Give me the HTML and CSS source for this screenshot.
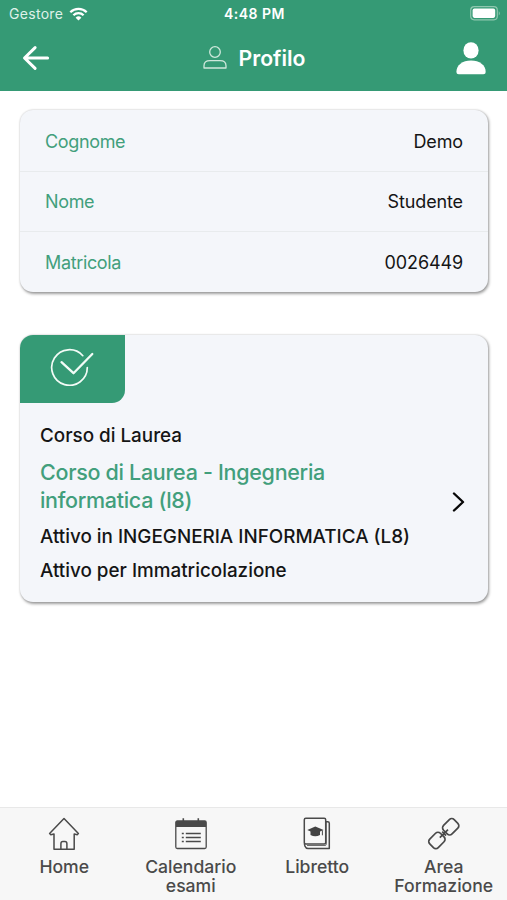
FILE: index.html
```html
<!DOCTYPE html>
<html lang="it">
<head>
<meta charset="utf-8">
<meta name="viewport" content="width=device-width, initial-scale=1">
<title>Profilo</title>
<link rel="stylesheet" href="styles.css">
</head>
<body>
<div class="app">
  <header class="header">
    <div class="status">
      <span class="carrier">Gestore
        <svg width="19" height="14" viewBox="0 0 18 14" fill="none" stroke="#fff" stroke-width="2.3"><path d="M.8 5.2a11.7 11.7 0 0 1 16.4 0M3.9 8.3a7.3 7.3 0 0 1 10.2 0"/><path d="M9 13.6 6.1 10.7a4.1 4.1 0 0 1 5.8 0z" fill="#fff" stroke="none"/></svg>
      </span>
      <span class="time">4:48 PM</span>
      <svg class="battery" width="31" height="15" viewBox="0 0 31 15"><rect x=".7" y=".7" width="26.6" height="13.1" rx="3.5" fill="none" stroke="#8fc7af" stroke-width="1.2"/><rect x="2.6" y="2.6" width="22.6" height="9.3" rx="1.8" fill="#fff"/><path d="M28.8 5v4.6q2-2.3 0-4.6z" fill="#8fc7af"/></svg>
    </div>
    <div class="bar">
      <svg width="28" height="26" viewBox="0 0 28 26" fill="none" stroke="#fff" stroke-width="3" stroke-linecap="round" stroke-linejoin="round"><path d="M13.1 2.6 2.5 13l10.6 10.4M3 13h22.6"/></svg>
      <h1 class="title">
        <svg width="24" height="24" viewBox="0 0 24 24" fill="none" stroke="#cfe8dc" stroke-width="1.3"><circle cx="12" cy="6" r="5.3"/><path d="M1 22v-2.2q0-5.1 6-5.1h10q6 0 6 5.1V22z" stroke-linejoin="round"/></svg>
        <span>Profilo</span>
      </h1>
      <svg class="user" width="30" height="33" viewBox="0 0 30 33" fill="#fff"><ellipse cx="15" cy="8.4" rx="7.6" ry="8.2"/><path d="M.4 30C.4 23 6.5 18.5 15 18.5S29.7 23 29.7 30q0 2.3-2.3 2.3H2.7Q.4 32.3.4 30z"/></svg>
    </div>
  </header>

  <main class="content">
    <dl class="card details">
      <div class="row"><dt>Cognome</dt><dd>Demo</dd></div>
      <div class="row"><dt>Nome</dt><dd>Studente</dd></div>
      <div class="row"><dt>Matricola</dt><dd>0026449</dd></div>
    </dl>
    <section class="card course">
      <div class="badge">
        <svg width="44" height="40" viewBox="0 0 44 40" fill="none" stroke="#f2fbf6" stroke-linecap="round" stroke-linejoin="round"><path d="M32.8 9.7A17.8 17.8 0 1 0 37.3 21.5" stroke-width="1.7"/><path d="m11.5 16.2 12 11L42.3 8" stroke-width="2.3"/></svg>
      </div>
      <div class="course-body">
        <div class="course-text">
          <p class="kind">Corso di Laurea</p>
          <h2 class="name">Corso di Laurea - Ingegneria<br>informatica (l8)</h2>
          <p class="active">Attivo in INGEGNERIA INFORMATICA (L8)</p>
          <p class="reason">Attivo per Immatricolazione</p>
        </div>
        <svg class="chevron" width="14" height="22" viewBox="0 0 14 22" fill="none" stroke="#080808" stroke-width="2.4" stroke-linecap="round" stroke-linejoin="round"><path d="m3 2.5 9 8.5-9 8.5"/></svg>
      </div>
    </section>
  </main>

  <nav class="tabs">
    <a class="tab">
      <svg width="32" height="34" viewBox="0 0 32 34" fill="none" stroke="#4a4a4a" stroke-width="1.5" stroke-linejoin="round"><path d="M16 1.5 1.6 16.5l1.2 1.2L6 17v15.3h20.2V17l3 .7 1.2-1.2z"/><path d="M12.9 32v-5.2q0-2.2 2-2.2h2q2 0 2 2.2V32"/></svg>
      <span>Home</span>
    </a>
    <a class="tab">
      <svg width="32" height="34" viewBox="0 0 32 34" fill="none" stroke="#4a4a4a"><rect x=".8" y="3.9" width="30.4" height="27.6" rx="1.5" stroke-width="1.3"/><path d="M1 4h30v6H1z" fill="#4a4a4a" stroke="none"/><path d="M8.3 1.3v4M23.3 1.3v4" stroke-width="1.6"/><path d="M10.8 16.5h15M10.8 20.5h15M10.8 24.5h15" stroke-width="1.4"/><path d="M6.8 16.5h2M6.8 20.5h2M6.8 24.5h2" stroke-width="1.6"/></svg>
      <span>Calendario<br>esami</span>
    </a>
    <a class="tab">
      <svg width="32" height="34" viewBox="0 0 32 34" fill="none" stroke="#4a4a4a" stroke-width="1.5" stroke-linejoin="round"><path d="M24.7 4.7h2q1.6 0 1.6 1.6v25.2H7q-2.2 0-3-2.2l-.7-3"/><path d="M25.3 5v22.2q0 1.3-1.3 1.3H6" stroke-width=".8"/><rect x="3.3" y="1.2" width="21.4" height="25.7" rx="1.5" fill="#f7f7f7"/><path d="m6.3 13.1 8-3.7 8.3 3.7-8.3 3.4z" fill="#424242" stroke="none"/><path d="M9.5 13.8v4.1q4.8 2.6 9.5 0v-4.1l-4.7 2z" fill="#424242" stroke="none"/><path d="M21.4 13.4v4.9" stroke-width="1"/></svg>
      <span>Libretto</span>
    </a>
    <a class="tab">
      <svg width="34" height="34" viewBox="0 0 34 34" fill="none" stroke="#4a4a4a" stroke-width="1.7"><rect x="-7.5" y="-6" width="15" height="12" rx="3.4" transform="translate(23.7 9.8) rotate(-45)"/><rect x="-7.5" y="-6" width="15" height="12" rx="3.4" transform="translate(9.9 23.4) rotate(-45)"/><path d="m12.8 20.6 8.2-8M15.2 14.6l3.8 4"/></svg>
      <span>Area<br>Formazione</span>
    </a>
  </nav>
</div>
</body>
</html>
```

FILE: styles.css
```css
* {
  box-sizing: border-box;
}

body,
h1,
h2,
p,
dl,
dd {
  margin: 0;
  font-weight: 400;
}

body {
  background: #fff;
  color: #151515;
  font-family: Inter, "Liberation Sans", sans-serif;
}

svg {
  display: block;
  flex: none;
}

.app {
  display: flex;
  flex-direction: column;
  height: 900px;
}

.header {
  height: 91px;
  background: #359a75;
  color: #fff;
}

.status {
  display: grid;
  grid-template-columns: 1fr auto 1fr;
  align-items: center;
  height: 27px;
  padding: 0 6px 0 9px;
  font-size: 14px;
}

.carrier {
  display: flex;
  align-items: center;
  gap: 6px;
  letter-spacing: 0.3px;
  color: #dff1e9;
}

.time {
  margin-left: -1px;
  font-weight: 600;
  letter-spacing: 0.5px;
}

.battery {
  justify-self: end;
}

.bar {
  display: grid;
  grid-template-columns: 1fr auto 1fr;
  align-items: center;
  height: 62px;
  padding: 0 21px 0 22px;
}

.title {
  display: flex;
  align-items: center;
  gap: 12px;
  font-size: 21.2px;
  font-weight: 600;
}

.user {
  justify-self: end;
}

.content {
  flex: 1;
  display: flex;
  flex-direction: column;
  gap: 43px;
  padding: 19px 19px 0 20px;
}

.card {
  overflow: hidden;
  border-radius: 13px;
  background: #f4f6fa;
  box-shadow: 1px 1.5px 3px rgba(0, 0, 0, 0.38), 0 0 2px rgba(0, 0, 0, 0.14);
}

.details {
  padding-top: 1px;
}

.row {
  display: flex;
  align-items: center;
  justify-content: space-between;
  height: 60px;
  padding: 0 25px;
  font-size: 18px;
  letter-spacing: -0.12px;
}

.row:last-child {
  height: 61px;
}

.row + .row {
  border-top: 1px solid #e8ebed;
}

.row dt {
  color: #429f7c;
  letter-spacing: -0.35px;
}

.course {
  height: 267px;
}

.badge {
  display: flex;
  width: 105px;
  height: 68px;
  padding: 11px 0 0 30px;
  border-bottom-right-radius: 13px;
  background: #359a75;
}

.course-body {
  display: flex;
  align-items: center;
  justify-content: space-between;
  padding: 19px 23px 0 20px;
}

.course-text {
  font-size: 18.85px;
  white-space: nowrap;
}

.course-text p {
  font-weight: 500;
  line-height: 28px;
}

.name {
  margin: 8px 0 9px;
  color: #429f7c;
  font-size: 21.5px;
  font-weight: 500;
  line-height: 28px;
  letter-spacing: -0.3px;
}

.course-text .reason {
  margin-top: 6px;
}

.chevron {
  margin-bottom: 3px;
}

.tabs {
  display: grid;
  grid-template-columns: repeat(4, 1fr);
  height: 93px;
  padding: 9px 0 0 1px;
  border-top: 1px solid #e8e8e8;
  background: #f7f7f7;
}

.tab {
  display: flex;
  flex-direction: column;
  align-items: center;
  gap: 6px;
  color: #4a4a4a;
  font-size: 17.6px;
  font-weight: 500;
  line-height: 19px;
  text-align: center;
}
```
